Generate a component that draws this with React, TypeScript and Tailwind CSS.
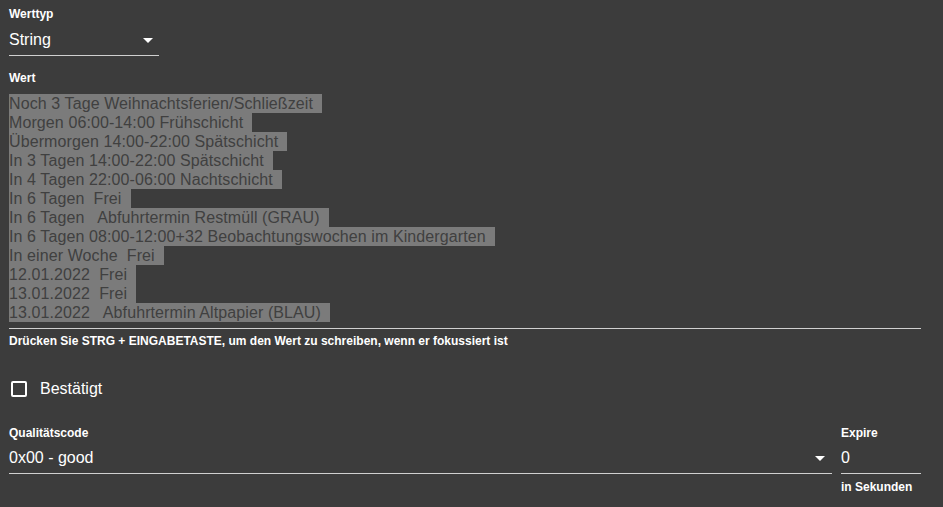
import React from "react";

const lines = [
  "Noch 3 Tage Weihnachtsferien/Schließzeit  ",
  "Morgen 06:00-14:00 Frühschicht  ",
  "Übermorgen 14:00-22:00 Spätschicht  ",
  "In 3 Tagen 14:00-22:00 Spätschicht  ",
  "In 4 Tagen 22:00-06:00 Nachtschicht  ",
  "In 6 Tagen  Frei  ",
  "In 6 Tagen   Abfuhrtermin Restmüll (GRAU)  ",
  "In 6 Tagen 08:00-12:00+32 Beobachtungswochen im Kindergarten  ",
  "In einer Woche  Frei  ",
  "12.01.2022  Frei  ",
  "13.01.2022  Frei  ",
  "13.01.2022   Abfuhrtermin Altpapier (BLAU)  ",
];

function Caret() {
  return (
    <svg width="10" height="5" viewBox="0 0 10 5" className="block">
      <path d="M0 0 L10 0 L5 5 Z" fill="#ffffff" />
    </svg>
  );
}

export default function App() {
  return (
    <div
      className="min-h-[507px] w-full bg-[#3c3c3c] text-white pl-[9px] pr-[22px] pt-[6px]"
      style={{ fontFamily: '"Liberation Sans", Arial, sans-serif' }}
    >
      {/* value type select */}
      <div className="w-[150px]">
        <div className="text-[12px] leading-4 font-bold">Werttyp</div>
        <div className="mt-[6px] h-[24px] flex items-center justify-between pr-[6px]">
          <span className="text-[16px] leading-6">String</span>
          <Caret />
        </div>
        <div className="mt-[3px] h-px bg-[#d0d0d0]" />
      </div>

      {/* value text area */}
      <div className="mt-[14px] text-[12px] leading-4 font-bold">Wert</div>
      <div className="mt-[8px]">
        {lines.map((l, i) => (
          <div
            key={i}
            className="w-fit h-[19px] leading-[19px] text-[16px] tracking-[0.1px] whitespace-pre bg-[#7b7b7b] text-[#404040]"
          >
            {l}
          </div>
        ))}
      </div>
      <div className="mt-[6px] h-px bg-[#d0d0d0]" />
      <div className="mt-[5px] text-[12px] leading-[14px] font-bold">
        Drücken Sie STRG + EINGABETASTE, um den Wert zu schreiben, wenn er fokussiert ist
      </div>

      {/* acknowledged checkbox */}
      <div className="mt-[32px] flex items-center h-[18px] pl-[2px]">
        <div className="w-[16px] h-[16px] border-2 border-white rounded-[2px]" />
        <span className="ml-[13px] text-[16px] leading-[18px]">Bestätigt</span>
      </div>

      {/* quality code + expire */}
      <div className="mt-[27px] flex gap-[9px]">
        <div className="flex-1">
          <div className="text-[12px] leading-4 font-bold">Qualitätscode</div>
          <div className="mt-[5px] h-[24px] flex items-center justify-between pr-[7px]">
            <span className="text-[16px] leading-6">0x00 - good</span>
            <Caret />
          </div>
          <div className="mt-[3px] h-px bg-[#d0d0d0]" />
        </div>
        <div className="w-[80px]">
          <div className="text-[12px] leading-4 font-bold">Expire</div>
          <div className="mt-[5px] h-[24px] flex items-center">
            <span className="text-[16px] leading-6">0</span>
          </div>
          <div className="mt-[3px] h-px bg-[#d0d0d0]" />
          <div className="mt-[5px] text-[12px] leading-4 font-bold">in Sekunden</div>
        </div>
      </div>
    </div>
  );
}
